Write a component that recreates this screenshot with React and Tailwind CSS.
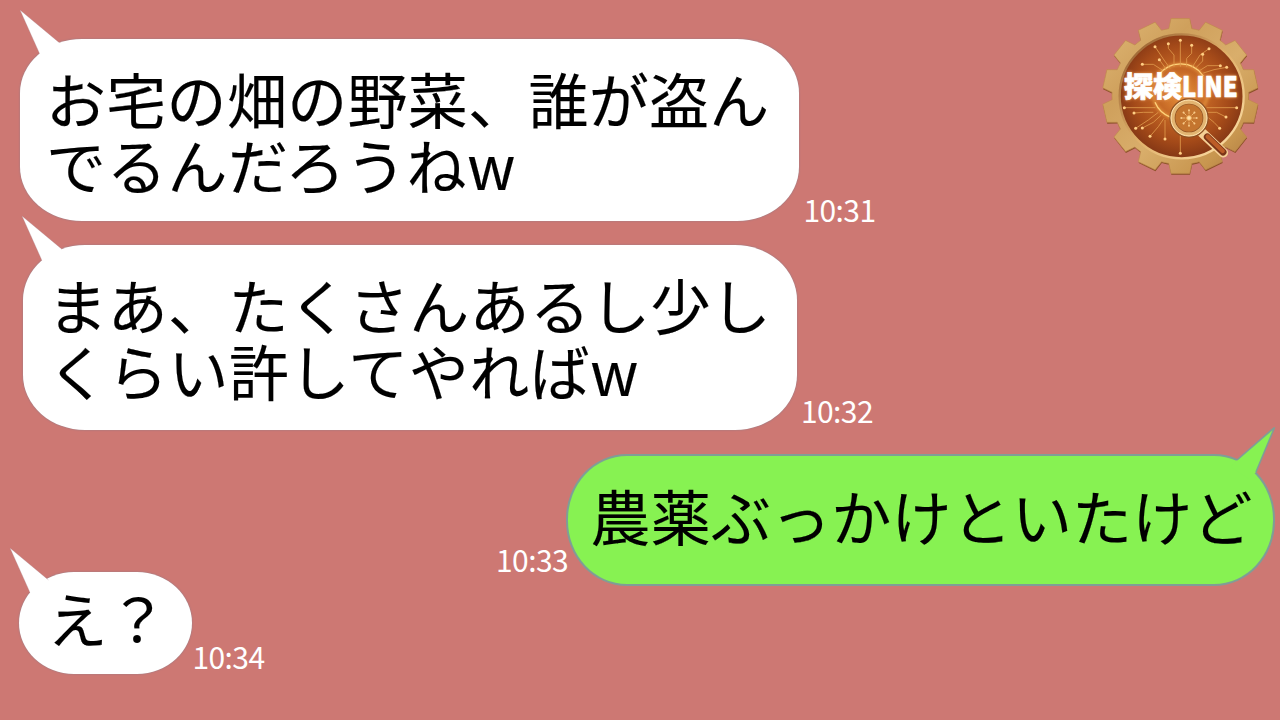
const messages = [
  {
    time: '10:31',
    lines: ['お宅の畑の野菜、誰が盗ん', 'でるんだろうねw'],
    row: 'ml-[20px] mt-[39px] gap-[4.5px]',
    bubble: 'w-[779px] h-[182px] rounded-[62px/54px] pl-[26px] pt-[26px]',
    text: 'tracking-[0.3px] last:tracking-[0.7px]',
    tail: '-top-[29.5px] -left-[0.5px]',
    stamp: '-mb-[8px]',
  },
  {
    time: '10:32',
    lines: ['まあ、たくさんあるし少し', 'くらい許してやればw'],
    row: 'ml-[22.5px] mt-[24px] gap-[4px]',
    bubble: 'w-[774.5px] h-[185px] rounded-[62px/55px] pl-[25px] pt-[26px]',
    text: 'tracking-[0.3px] last:tracking-[0.5px]',
    tail: '-top-[29.5px] -left-[0.5px]',
    stamp: 'mb-0',
  },
  {
    mine: true,
    time: '10:33',
    lines: ['農薬ぶっかけといたけど'],
    row: 'mr-[5px] mt-[23.5px]',
    bubble: 'w-[709.5px] h-[132.5px] rounded-[61px/65px] pl-[23px] pt-[26.5px]',
    text: 'tracking-[0.2px]',
    stamp: 'mb-[7px] -mr-[2.5px]',
  },
  {
    time: '10:34',
    lines: ['え？'],
    row: 'ml-[18.5px] -mt-[14px] gap-[1px]',
    bubble: 'w-[173px] h-[102px] rounded-[55px/51px] pl-[29px] pt-[12px]',
    text: 'tracking-[0.2px]',
    tail: '-top-[24.5px] -left-[8.5px]',
    stamp: '-mb-[2px]',
  },
];

function Tail({ className }) {
  return (
    <svg className={`absolute overflow-visible ${className}`} width="44" height="48" viewBox="0 0 44 48">
      <path d="M0 0 L39 32.5 L42 46 L24 50 L19.5 43.5 Z" fill="#fff" />
      <path d="M38.5 32 L0 0 L19.5 43.5" fill="none" stroke="#a5808a" strokeWidth="0.3" />
    </svg>
  );
}

function MineTail() {
  return (
    <svg className="absolute -top-[29px] right-0 overflow-visible" width="44" height="52" viewBox="0 0 44 52">
      <path d="M45.5 0.5 L8 33 L2 40 L20 52 L27 45 Z" fill="#87f252" />
      <path d="M8 33 L45.5 0.5 L27 45" fill="none" stroke="#7f9e96" strokeWidth="1.6" />
    </svg>
  );
}

function Message({ msg }) {
  return (
    <div className={`flex items-end ${msg.mine ? 'flex-row-reverse' : ''} ${msg.row}`}>
      <div
        className={`relative shrink-0 ${msg.bubble} ${
          msg.mine ? 'bg-[#87f252] border-2 border-[#7f9e96]' : 'bg-white shadow-[0_0_2px_#8c7f8c]'
        }`}
      >
        {msg.mine ? <MineTail /> : <Tail className={msg.tail} />}
        {msg.lines.map((line) => (
          <p
            key={line}
            className={`relative whitespace-nowrap text-[60px] leading-[66px] text-black [-webkit-text-stroke:0.15px_#000] ${msg.text}`}
          >
            {line}
          </p>
        ))}
      </div>
      <span className={`text-[30px] leading-[40px] tracking-[-0.6px] text-white ${msg.stamp}`}>{msg.time}</span>
    </div>
  );
}

const TEETH = 14;

function gearPath(cx, cy, root, tip) {
  const step = (Math.PI * 2) / TEETH;
  const pt = (r, a) => `${(cx + r * Math.sin(a)).toFixed(1)} ${(cy - r * Math.cos(a)).toFixed(1)}`;
  let d = '';
  for (let i = 0; i < TEETH; i++) {
    const a = i * step;
    d += `${i ? 'L' : 'M'}${pt(root, a - 0.17)} L${pt(tip, a - 0.12)} L${pt(tip, a + 0.12)} L${pt(root, a + 0.17)} `;
    d += `A${root} ${root} 0 0 1 ${pt(root, a + step - 0.17)} `;
  }
  return `${d}Z`;
}

// circuit traces: points from the centre outwards, ending in a node
const traces = [
  [[271, 185], [271, 106]],
  [[252, 185], [252, 150], [235, 130], [235, 116]],
  [[290, 185], [290, 160], [305, 145], [305, 121]],
  [[240, 190], [222, 165], [195, 125]],
  [[306, 188], [330, 150], [357, 131]],
  [[228, 192], [208, 164]],
  [[218, 196], [190, 178], [157, 178]],
  [[316, 190], [338, 168], [338, 148]],
  [[330, 196], [352, 182], [391, 182]],
  [[340, 204], [372, 194], [410, 187]],
  [[196, 308], [103, 308]],
  [[190, 322], [160, 322], [132, 324]],
  [[205, 322], [175, 345], [137, 370]],
  [[214, 330], [190, 352], [157, 369]],
  [[222, 340], [205, 365], [180, 394]],
  [[225, 345], [225, 402]],
  [[271, 390], [271, 445]],
  [[350, 308], [440, 308]],
  [[352, 322], [380, 322], [408, 336]],
  [[350, 334], [372, 352], [389, 370]],
];

function LogoText(props) {
  return (
    <g fontFamily="'Noto Sans CJK JP', sans-serif" fontWeight="900" strokeLinejoin="round" {...props}>
      <text x="102" y="277" fontSize="86" textLength="174" lengthAdjust="spacingAndGlyphs">
        探検
      </text>
      <text x="276" y="277" fontSize="84" textLength="167" lengthAdjust="spacingAndGlyphs">
        LINE
      </text>
    </g>
  );
}

function Logo() {
  return (
    <svg width="180" height="180" viewBox="0 0 540 540">
      <defs>
        <linearGradient id="gold" x1="0" y1="0" x2="1" y2="1">
          <stop offset="0" stopColor="#dfb876" />
          <stop offset="0.3" stopColor="#cfa05c" />
          <stop offset="0.55" stopColor="#d9ae6b" />
          <stop offset="0.8" stopColor="#c8964f" />
          <stop offset="1" stopColor="#a5733c" />
        </linearGradient>
        <linearGradient id="rim" x1="0" y1="0" x2="1" y2="1">
          <stop offset="0" stopColor="#8a5226" />
          <stop offset="0.5" stopColor="#e0b06a" />
          <stop offset="1" stopColor="#ffe3ac" />
        </linearGradient>
        <radialGradient id="disc" cx="0.5" cy="0.48" r="0.52">
          <stop offset="0" stopColor="#e8923a" />
          <stop offset="0.4" stopColor="#c26424" />
          <stop offset="0.75" stopColor="#a44a19" />
          <stop offset="1" stopColor="#843715" />
        </radialGradient>
        <filter id="glow" x="-20%" y="-20%" width="140%" height="140%">
          <feGaussianBlur stdDeviation="5" />
        </filter>
      </defs>

      <path d={gearPath(272, 277, 205, 234)} fill="#8b5128" />
      <path d={gearPath(271, 273, 205, 234)} fill="url(#gold)" stroke="#c08a4b" strokeWidth="2" />
      <circle cx="275" cy="274" r="186" fill="url(#disc)" stroke="url(#rim)" strokeWidth="7" />

      <circle cx="271" cy="260" r="82" fill="none" stroke="#f7b04e" strokeWidth="10" opacity="0.5" filter="url(#glow)" />
      <path d="M204 213 A82 82 0 0 1 340 213" fill="none" stroke="#ffd27a" strokeWidth="4" />
      <path d="M195 292 A82 82 0 0 0 242 337" fill="none" stroke="#ffd27a" strokeWidth="4" />
      {traces.map((points, i) => {
        const [x, y] = points[points.length - 1];
        return (
          <g key={i}>
            <polyline points={points.map((p) => p.join(',')).join(' ')} fill="none" stroke="#e09a4c" strokeWidth="2.5" />
            <circle cx={x} cy={y} r="4.5" fill="#ffce84" />
          </g>
        );
      })}

      <LogoText fill="#e89a58" stroke="#e89a58" strokeWidth="3" filter="url(#glow)" aria-hidden="true" />
      <LogoText fill="#fff" stroke="#fff" strokeWidth="2" />

      <path d="M337 384 L400 443" stroke="#f5cf95" strokeWidth="29" strokeLinecap="round" />
      <path d="M352 396 L399 441" stroke="#7b3518" strokeWidth="21" strokeLinecap="round" />
      <path d="M353 395 L398 438" stroke="#bc5c27" strokeWidth="13" strokeLinecap="round" />
      <circle cx="297" cy="339" r="50" fill="#c4752f" stroke="#8e5123" strokeWidth="18" />
      <circle cx="297" cy="339" r="49" fill="none" stroke="#e3b572" strokeWidth="12" />
      <circle cx="297" cy="339" r="54" fill="none" stroke="#ffe5b2" strokeWidth="3" />
      {[0, 45, 90, 135, 180, 225, 270, 315].map((deg) => (
        <g key={deg} transform={`rotate(${deg} 297 339)`}>
          <path d="M297 328 V318" stroke="#f4bd76" strokeWidth="2.5" />
          <circle cx="297" cy="316" r="3" fill="#f9cc8c" />
        </g>
      ))}
      <circle cx="297" cy="339" r="7" fill="#ffe2a8" stroke="#f3b263" strokeWidth="3" />
    </svg>
  );
}

export default function App() {
  return (
    <div className="relative flex h-[720px] w-[1280px] flex-col overflow-hidden bg-[#cd7873] font-['Noto_Sans_CJK_JP',sans-serif]">
      {messages.map((msg) => (
        <Message key={msg.time} msg={msg} />
      ))}
      <div className="absolute left-[1090px] top-[5px]">
        <Logo />
      </div>
    </div>
  );
}
